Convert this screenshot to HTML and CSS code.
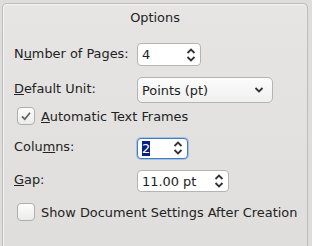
FILE: index.html
```html
<!DOCTYPE html>
<html lang="en">
<head>
<meta charset="UTF-8">
<title>Options</title>
<link rel="stylesheet" href="styles.css">
</head>
<body>
    <div class="group">
        <div class="group-title">Options</div>

        <div class="row row-pages">
            <label class="label">N<u>u</u>mber of Pages:</label>
            <div class="spin spin-pages">
                <span class="spin-value">4</span>
                <svg class="spin-arrows" width="10" height="16" viewBox="0 0 10 16"><path d="M1.5 6 L5 2.5 L8.5 6 M1.5 10 L5 13.5 L8.5 10" fill="none" stroke="#333" stroke-width="1.8"/></svg>
            </div>
        </div>

        <div class="row row-unit">
            <label class="label"><u>D</u>efault Unit:</label>
            <div class="combo">
                <span class="spin-value">Points (pt)</span>
                <svg class="combo-arrow" width="10" height="8" viewBox="0 0 10 8"><path d="M1.5 2 L5 5.5 L8.5 2" fill="none" stroke="#333" stroke-width="1.8"/></svg>
            </div>
        </div>

        <div class="check-row check-frames">
            <span class="checkbox">
                <svg width="12" height="12" viewBox="0 0 12 12"><path d="M2 6.5 L4.8 9.2 L10 2.8" fill="none" stroke="#666" stroke-width="1.8"/></svg>
            </span>
            <span><u>A</u>utomatic Text Frames</span>
        </div>

        <div class="row">
            <label class="label">Colu<u>m</u>ns:</label>
            <div class="spin spin-columns focused">
                <span class="spin-value"><span class="selected">2</span></span>
                <svg class="spin-arrows" width="10" height="16" viewBox="0 0 10 16"><path d="M1.5 6 L5 2.5 L8.5 6 M1.5 10 L5 13.5 L8.5 10" fill="none" stroke="#333" stroke-width="1.8"/></svg>
            </div>
        </div>

        <div class="row">
            <label class="label"><u>G</u>ap:</label>
            <div class="spin spin-gap">
                <span class="spin-value">11.00 pt</span>
                <svg class="spin-arrows" width="10" height="16" viewBox="0 0 10 16"><path d="M1.5 6 L5 2.5 L8.5 6 M1.5 10 L5 13.5 L8.5 10" fill="none" stroke="#333" stroke-width="1.8"/></svg>
            </div>
        </div>

        <div class="check-row">
            <span class="checkbox"></span>
            <span>Show Document Settings After Creation</span>
        </div>
    </div>
</body>
</html>
```

FILE: styles.css
```css
body {
    margin: 0;
    padding: 0;
    font-family: "DejaVu Sans", sans-serif;
    font-size: 12.9px;
    color: #222;
    background-color: #dedddc;
    width: 312px;
    height: 246px;
    overflow: hidden;
}

.group {
    display: flex;
    flex-direction: column;
    gap: 11px;
    margin: 3px 4px 0 2px;
    height: 243px;
    box-sizing: border-box;
    border: 1px solid #bdbcbb;
    border-bottom: none;
    border-radius: 5px 5px 0 0;
    background: linear-gradient(#e6e5e4, #dfdedd);
    box-shadow: inset 1px 1px 0 #f4f4f4;
    padding: 0 0 0 11px;
}

.group-title {
    text-align: center;
    margin-top: 6px;
    margin-bottom: 7px;
    height: 15px;
    line-height: 15px;
    padding-right: 11px;
}

.row {
    display: flex;
    align-items: center;
    height: 22px;
}

.row-pages {
    height: 23px;
}

.row-unit {
    height: 26px;
}

.label {
    width: 123px;
    padding-bottom: 3px;
}

.spin,
.combo {
    display: flex;
    align-items: center;
    justify-content: space-between;
    height: 22px;
    box-sizing: border-box;
    background-color: #fff;
    border: 1px solid #b5b4b3;
    border-radius: 4px;
    padding: 0 4px 0 4px;
}

.spin-pages {
    width: 64px;
    height: 23px;
}

.combo {
    width: 136px;
    height: 26px;
    background: linear-gradient(#fcfcfc, #f0f0ef);
    border-radius: 5px;
    padding-right: 8px;
}

.spin-columns {
    width: 51px;
    height: 21px;
}

.spin-gap {
    width: 92px;
}

.focused {
    border: 1px solid #3f7cc4;
    box-shadow: 0 0 0 1px #a6c3e4;
}

.selected {
    background-color: #0a1f86;
    color: #fff;
}

.spin-arrows {
    display: block;
}

.check-row {
    display: flex;
    align-items: center;
    height: 18px;
    padding-left: 3px;
}

.check-frames {
    margin-top: -7px;
    margin-bottom: 1px;
}

.checkbox {
    display: flex;
    align-items: center;
    justify-content: center;
    width: 18px;
    height: 18px;
    box-sizing: border-box;
    border: 1px solid #b0afae;
    border-radius: 4px;
    background: linear-gradient(#fdfdfd, #ececeb);
    margin-right: 6px;
}
```
